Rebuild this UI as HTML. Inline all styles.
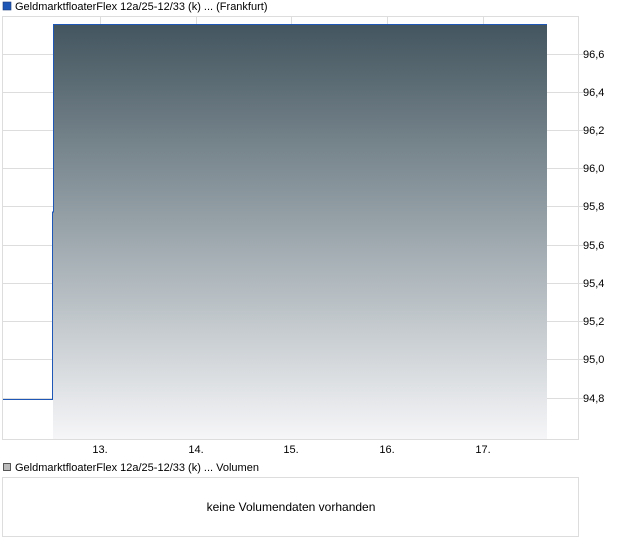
<!DOCTYPE html>
<html><head><meta charset="utf-8"><style>
body{margin:0;background:#fff;width:620px;height:546px;overflow:hidden;font-family:"Liberation Sans",sans-serif;}
</style></head><body>
<svg width="620" height="546" xmlns="http://www.w3.org/2000/svg" style="position:absolute;left:0;top:0">
<defs><linearGradient id="g" x1="0" y1="0" x2="0" y2="1">
<stop offset="0" stop-color="#43555f"/><stop offset="0.5" stop-color="#9aa5ab"/><stop offset="1" stop-color="#f6f6f8"/></linearGradient></defs>
<rect x="3" y="2" width="8" height="8" fill="#1f57b6" stroke="#1a3a7a" stroke-width="0.6"/>
<text x="15" y="10" font-size="11" fill="#000">GeldmarktfloaterFlex 12a/25-12/33 (k) ... (Frankfurt)</text>
<rect x="2.5" y="16.5" width="576" height="423" fill="#fff" stroke="#ddd"/>
<g stroke="#ddd" stroke-width="1">
<line x1="100.5" y1="17" x2="100.5" y2="440"/><line x1="196.5" y1="17" x2="196.5" y2="440"/>
<line x1="291.5" y1="17" x2="291.5" y2="440"/><line x1="387.5" y1="17" x2="387.5" y2="440"/>
<line x1="483.5" y1="17" x2="483.5" y2="440"/>
<line x1="3" y1="54.5" x2="585" y2="54.5"/><line x1="3" y1="92.5" x2="585" y2="92.5"/>
<line x1="3" y1="130.5" x2="585" y2="130.5"/><line x1="3" y1="168.5" x2="585" y2="168.5"/>
<line x1="3" y1="206.5" x2="585" y2="206.5"/><line x1="3" y1="245.5" x2="585" y2="245.5"/>
<line x1="3" y1="283.5" x2="585" y2="283.5"/><line x1="3" y1="321.5" x2="585" y2="321.5"/>
<line x1="3" y1="359.5" x2="585" y2="359.5"/><line x1="3" y1="398.5" x2="585" y2="398.5"/>
</g>
<rect x="53" y="24" width="494" height="415" fill="url(#g)"/>
<polyline points="3,399.5 52.5,399.5 52.5,212 53.5,212 53.5,24.5 547,24.5" fill="none" stroke="#1f57b6" stroke-width="1"/>
<g font-size="11" fill="#000">
<text x="583" y="58">96,6</text><text x="583" y="96">96,4</text><text x="583" y="134">96,2</text>
<text x="583" y="172">96,0</text><text x="583" y="210">95,8</text><text x="583" y="249">95,6</text>
<text x="583" y="287">95,4</text><text x="583" y="325">95,2</text><text x="583" y="363">95,0</text>
<text x="583" y="402">94,8</text>
</g>
<g font-size="11" fill="#000" text-anchor="middle">
<text x="100" y="453">13.</text><text x="196" y="453">14.</text><text x="291" y="453">15.</text>
<text x="387" y="453">16.</text><text x="483" y="453">17.</text>
</g>
<rect x="3.5" y="463.5" width="7" height="7" fill="#bbb" stroke="#333" stroke-width="0.8"/>
<text x="15" y="471" font-size="11" fill="#000">GeldmarktfloaterFlex 12a/25-12/33 (k) ... Volumen</text>
<rect x="2.5" y="477.5" width="576" height="59" fill="#fff" stroke="#ddd"/>
<text x="291" y="511" font-size="12" fill="#000" text-anchor="middle">keine Volumendaten vorhanden</text>
</svg>
</body></html>
